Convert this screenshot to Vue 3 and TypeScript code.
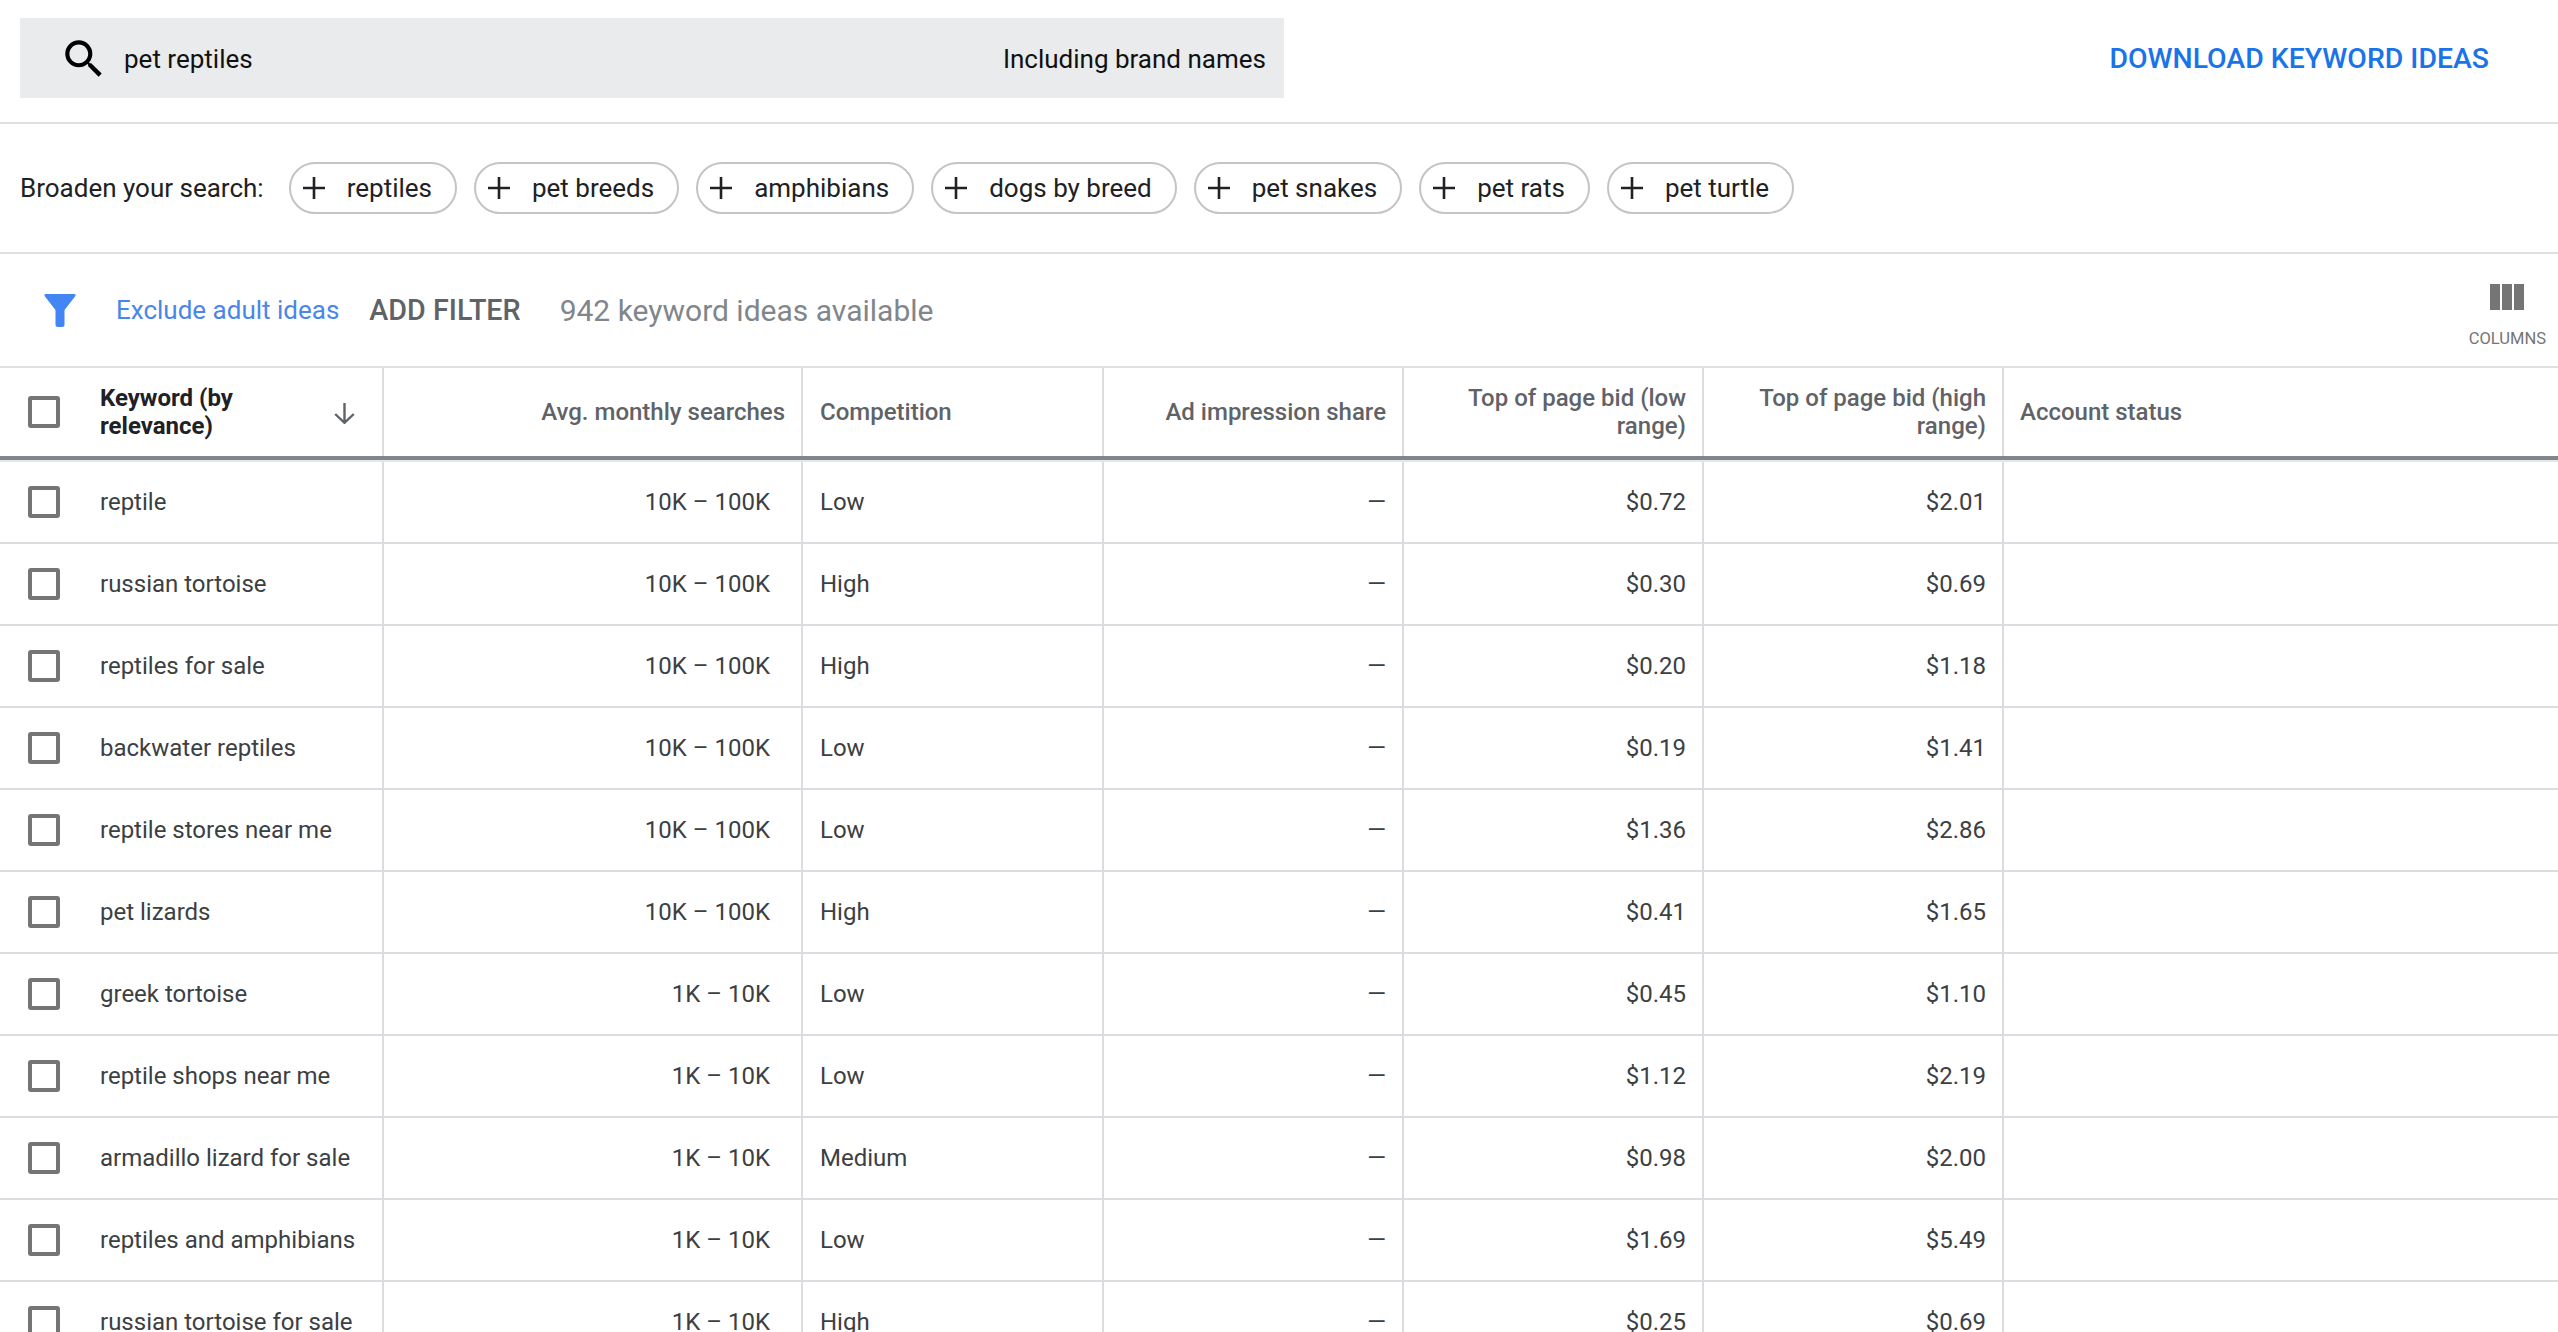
<template>
  <div class="page">
    <header class="top-bar">
      <div class="search-box">
        <svg class="search-icon" viewBox="0 0 24 24" fill="#000">
          <path d="M15.5 14h-.79l-.28-.27A6.471 6.471 0 0 0 16 9.5 6.5 6.5 0 1 0 9.5 16c1.61 0 3.09-.59 4.23-1.57l.27.28v.79l5 4.99L20.49 19l-4.99-5zm-6 0C7.01 14 5 11.99 5 9.5S7.01 5 9.5 5 14 7.01 14 9.5 11.99 14 9.5 14z" />
        </svg>
        <span class="search-text">pet reptiles</span>
        <span class="brand-text">Including brand names</span>
      </div>
      <a class="download">DOWNLOAD KEYWORD IDEAS</a>
    </header>

    <section class="broaden">
      <span class="broaden-label">Broaden your search:</span>
      <button v-for="chip in chips" :key="chip" class="chip" type="button">
        <svg class="plus" viewBox="0 0 22 22" fill="none" stroke="#202124" stroke-width="2.6">
          <path d="M11 0v22M0 11h22" />
        </svg>
        {{ chip }}
      </button>
    </section>

    <section class="filters">
      <svg class="funnel" viewBox="0 0 32 33" fill="#4285f4">
        <path d="M2 0H30Q32.500 0 31 2.500L20.500 16V30.500Q20.500 33 18 33H14Q11.500 33 11.500 30.500V16L1 2.500Q-.5 0 2 0Z" />
      </svg>
      <a class="exclude">Exclude adult ideas</a>
      <span class="add-filter">ADD FILTER</span>
      <span class="available">942 keyword ideas available</span>
      <div class="columns-btn">
        <svg class="columns-icon" viewBox="0 0 34 26" fill="#757575">
          <rect x="0" y="0" width="10" height="26" />
          <rect x="12" y="0" width="10" height="26" />
          <rect x="24" y="0" width="10" height="26" />
        </svg>
        <span class="columns-label">COLUMNS</span>
      </div>
    </section>

    <div class="table">
      <div class="row head">
        <div class="cell first">
          <span class="checkbox" />
          <span class="keyword-head">Keyword (by relevance)</span>
          <svg class="arrow" viewBox="0 0 21 21" fill="none" stroke="#5f6368" stroke-width="2.4">
            <path d="M10.500 0V19.500M1.200 11L10.500 19.800L19.800 11" />
          </svg>
        </div>
        <div class="cell right">Avg. monthly searches</div>
        <div class="cell">Competition</div>
        <div class="cell right">Ad impression share</div>
        <div class="cell right">Top of page bid (low range)</div>
        <div class="cell right">Top of page bid (high range)</div>
        <div class="cell last">Account status</div>
      </div>
      <div v-for="item in rows" :key="item.keyword" class="row body">
        <div class="cell first">
          <span class="checkbox" />
          <span>{{ item.keyword }}</span>
        </div>
        <div class="cell right searches">{{ item.searches }}</div>
        <div class="cell">{{ item.competition }}</div>
        <div class="cell right">—</div>
        <div class="cell right">{{ item.low }}</div>
        <div class="cell right">{{ item.high }}</div>
        <div class="cell last" />
      </div>
    </div>
  </div>
</template>

<script setup lang="ts">
interface KeywordRow {
  keyword: string
  searches: string
  competition: string
  low: string
  high: string
}

const chips = ['reptiles', 'pet breeds', 'amphibians', 'dogs by breed', 'pet snakes', 'pet rats', 'pet turtle']

const rows: KeywordRow[] = [
  { keyword: 'reptile', searches: '10K – 100K', competition: 'Low', low: '$0.72', high: '$2.01' },
  { keyword: 'russian tortoise', searches: '10K – 100K', competition: 'High', low: '$0.30', high: '$0.69' },
  { keyword: 'reptiles for sale', searches: '10K – 100K', competition: 'High', low: '$0.20', high: '$1.18' },
  { keyword: 'backwater reptiles', searches: '10K – 100K', competition: 'Low', low: '$0.19', high: '$1.41' },
  { keyword: 'reptile stores near me', searches: '10K – 100K', competition: 'Low', low: '$1.36', high: '$2.86' },
  { keyword: 'pet lizards', searches: '10K – 100K', competition: 'High', low: '$0.41', high: '$1.65' },
  { keyword: 'greek tortoise', searches: '1K – 10K', competition: 'Low', low: '$0.45', high: '$1.10' },
  { keyword: 'reptile shops near me', searches: '1K – 10K', competition: 'Low', low: '$1.12', high: '$2.19' },
  { keyword: 'armadillo lizard for sale', searches: '1K – 10K', competition: 'Medium', low: '$0.98', high: '$2.00' },
  { keyword: 'reptiles and amphibians', searches: '1K – 10K', competition: 'Low', low: '$1.69', high: '$5.49' },
  { keyword: 'russian tortoise for sale', searches: '1K – 10K', competition: 'High', low: '$0.25', high: '$0.69' }
]
</script>

<style>
html,
body {
  margin: 0;
  background: #fff;
}
</style>

<style scoped>
.page {
  height: 1332px;
  overflow: hidden;
  background: #fff;
  color: #202124;
  font-family: Roboto, "Liberation Sans", sans-serif;
}

.top-bar {
  display: flex;
  align-items: center;
  justify-content: space-between;
  box-sizing: border-box;
  height: 124px;
  padding: 0 69px 6px 20px;
  border-bottom: 2px solid #e0e0e0;
}

.search-box {
  display: flex;
  align-items: center;
  box-sizing: border-box;
  width: 1264px;
  height: 80px;
  padding: 2px 18px 0 39px;
  background: #e9ebed;
  font-size: 26px;
  color: #111;
}

.search-icon {
  width: 50px;
  height: 50px;
  margin-right: 15px;
}

.brand-text {
  margin-left: auto;
}

.download {
  color: #1a73e8;
  font-size: 28.4px;
  font-weight: 500;
}

.broaden {
  display: flex;
  align-items: center;
  box-sizing: border-box;
  height: 130px;
  padding: 0 20px;
  border-bottom: 2px solid #e0e0e0;
}

.broaden-label {
  margin-right: 25px;
  font-size: 26px;
}

.chip {
  display: flex;
  align-items: center;
  box-sizing: border-box;
  height: 52px;
  margin-right: 17px;
  padding: 0 23px 0 12px;
  border: 2px solid #c4c4c4;
  border-radius: 26px;
  background: #fff;
  color: #202124;
  font-family: inherit;
  font-size: 26px;
}

.plus {
  width: 22px;
  height: 22px;
  margin-right: 22px;
}

.filters {
  display: flex;
  align-items: center;
  box-sizing: border-box;
  height: 114px;
  padding: 0 12px 0 44px;
  border-bottom: 2px solid #e0e0e0;
}

.funnel {
  width: 32px;
  height: 33px;
  margin-right: 40px;
}

.exclude {
  margin-right: 30px;
  color: #4a86e8;
  font-size: 26px;
}

.add-filter {
  margin-right: 39px;
  color: #5f6368;
  font-size: 28.7px;
  font-weight: 500;
}

.available {
  color: #80868b;
  font-size: 30px;
}

.columns-btn {
  display: flex;
  flex-direction: column;
  align-items: center;
  margin-top: 11px;
  margin-left: auto;
}

.columns-icon {
  width: 34px;
  height: 26px;
  margin-bottom: 19px;
}

.columns-label {
  color: #757575;
  font-size: 16.5px;
}

.row {
  display: grid;
  grid-template-columns: 384px 419px 301px 300px 300px 300px 1fr;
  box-sizing: border-box;
  font-size: 24px;
}

.head {
  height: 92px;
  border-bottom: 4px solid #80868b;
  box-shadow: 0 2px 0 #e3e7ea;
  color: #5f6368;
  font-weight: 500;
  line-height: 28px;
}

.body {
  height: 82px;
  border-bottom: 2px solid #dadce0;
  color: #3c4043;
}

/* first row sits under the header's light shadow line */
.head + .body {
  height: 84px;
  padding-top: 2px;
}

.cell {
  display: flex;
  align-items: center;
  box-sizing: border-box;
  padding: 0 16px 0 17px;
  border-right: 2px solid #dadce0;
}

.right {
  justify-content: flex-end;
  text-align: right;
}

.searches {
  padding-right: 31px;
}

.first {
  padding: 0 0 0 28px;
}

.last {
  padding-left: 16px;
  border-right: 0;
}

.checkbox {
  flex: none;
  box-sizing: border-box;
  width: 32px;
  height: 32px;
  margin-right: 40px;
  border: 4px solid #757575;
  border-radius: 3px;
}

.keyword-head {
  width: 190px;
  color: #202124;
  font-weight: 700;
}

.arrow {
  flex: none;
  width: 21px;
  height: 21px;
  margin: 3px 0 0 44px;
}
</style>
